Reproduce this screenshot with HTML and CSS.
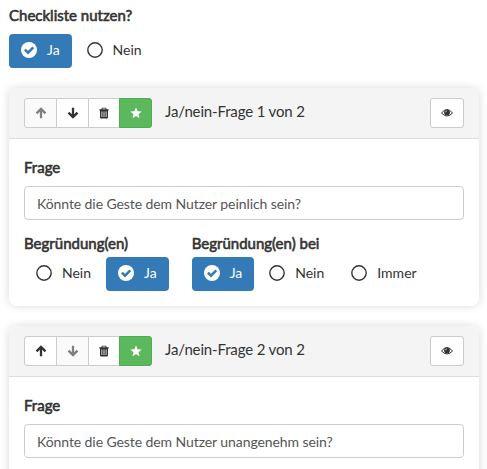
FILE: index.html
```html
<!DOCTYPE html>
<html lang="de">
<head>
<meta charset="utf-8">
<title>Checkliste</title>
<link rel="stylesheet" href="styles.css">
</head>
<body>
<svg width="0" height="0" class="defs">
  <symbol id="up" viewBox="0 0 12 12"><path d="M6 11.200V2.200M1.500 6.400L6 1.900L10.500 6.400" fill="none" stroke="currentColor" stroke-width="2.300"/></symbol>
  <symbol id="down" viewBox="0 0 12 12"><path d="M6 .8V9.800M1.500 5.600L6 10.100L10.500 5.600" fill="none" stroke="currentColor" stroke-width="2.300"/></symbol>
  <symbol id="trash" viewBox="0 0 12 12"><path fill="currentColor" fill-rule="evenodd" d="M4 0.800h4l.8 1.500H10.600v1.200H1.400V2.300H3.200zM4.600 1.600l-.4.7h3.600l-.4-.7zM2 3.500h8v6.900q0 1-1 1H3q-1 0-1-1zM3.500 4.600v5.400h.8V4.600zM5.600 4.600v5.400h.8V4.600zM7.700 4.600v5.400h.8V4.600z"/></symbol>
  <symbol id="star" viewBox="0 0 12 12"><path fill="currentColor" d="M6 .3L7.600 4.200L11.700 4.500L8.500 7.200L9.500 11.300L6 9.100L2.500 11.300L3.500 7.200L.3 4.500L4.400 4.200z"/></symbol>
  <symbol id="eye" viewBox="0 0 12 10"><path d="M.5 5Q6-1.800 11.500 5Q6 11 .5 5z" fill="none" stroke="currentColor" stroke-width="1"/><circle cx="6" cy="4.400" r="2.900" fill="currentColor"/><path d="M4.500 4.300Q4.600 3 5.800 2.800" fill="none" stroke="#fff" stroke-width=".7"/></symbol>
  <symbol id="on" viewBox="0 0 16 16"><circle cx="8" cy="8" r="8" fill="currentColor"/><path d="M3.900 7.600L7 10.700L12.300 5.400" fill="none" stroke="#337ab7" stroke-width="2.500"/></symbol>
  <symbol id="off" viewBox="0 0 16 16"><circle cx="8" cy="8" r="7.200" fill="none" stroke="currentColor" stroke-width="1.400"/></symbol>
</svg>
<main class="page">
  <div class="label">Checkliste nutzen?</div>
  <div class="options">
    <span class="option active"><svg><use href="#on"/></svg>Ja</span>
    <span class="option"><svg><use href="#off"/></svg>Nein</span>
  </div>

  <section class="card">
    <header class="card-head">
      <div class="group">
        <button class="btn disabled"><svg><use href="#up"/></svg></button>
        <button class="btn"><svg><use href="#down"/></svg></button>
        <button class="btn trash"><svg><use href="#trash"/></svg></button>
        <button class="btn success"><svg><use href="#star"/></svg></button>
      </div>
      <h2 class="title">Ja/nein-Frage 1 von 2</h2>
      <button class="btn eye"><svg><use href="#eye"/></svg></button>
    </header>
    <div class="card-body">
      <div class="label">Frage</div>
      <div class="input">Könnte die Geste dem Nutzer peinlich sein?</div>
      <div class="fields">
        <div class="field">
          <div class="label">Begründung(en)</div>
          <div class="options">
            <span class="option"><svg><use href="#off"/></svg>Nein</span>
            <span class="option active"><svg><use href="#on"/></svg>Ja</span>
          </div>
        </div>
        <div class="field">
          <div class="label">Begründung(en) bei</div>
          <div class="options">
            <span class="option active"><svg><use href="#on"/></svg>Ja</span>
            <span class="option"><svg><use href="#off"/></svg>Nein</span>
            <span class="option"><svg><use href="#off"/></svg>Immer</span>
          </div>
        </div>
      </div>
    </div>
  </section>

  <section class="card">
    <header class="card-head">
      <div class="group">
        <button class="btn"><svg><use href="#up"/></svg></button>
        <button class="btn disabled"><svg><use href="#down"/></svg></button>
        <button class="btn trash"><svg><use href="#trash"/></svg></button>
        <button class="btn success"><svg><use href="#star"/></svg></button>
      </div>
      <h2 class="title">Ja/nein-Frage 2 von 2</h2>
      <button class="btn eye"><svg><use href="#eye"/></svg></button>
    </header>
    <div class="card-body">
      <div class="label">Frage</div>
      <div class="input">Könnte die Geste dem Nutzer unangenehm sein?</div>
    </div>
  </section>
</main>
</body>
</html>
```

FILE: styles.css
```css
* { box-sizing: border-box; }
html, body { height: 100%; }
body {
  margin: 0;
  overflow: hidden;
  background: #fff;
  color: #333;
  font: 14px/20px Lato, sans-serif;
}
.defs { display: block; height: 0; }
.page { height: 100%; overflow: hidden; padding: 6px 0 0 9px; }
.label {
  height: 20px;
  font-size: 15px;
  line-height: 18px;
  -webkit-text-stroke: 0.6px #333;
  white-space: nowrap;
}
.page > .label { line-height: 19px; }
.options { display: flex; gap: 3px; }
.page > .options { margin-top: 8px; }
.option {
  display: flex;
  align-items: center;
  height: 34px;
  padding: 0 12px 2px;
  border-radius: 4px;
  line-height: 32px;
}
.option svg { width: 16px; height: 16px; margin-right: 10px; }
.active { background: #337ab7; color: #fff; }
.card {
  width: 470px;
  height: 218px;
  margin-top: 20px;
  overflow: hidden;
  border-radius: 8px;
  background: #fff;
  box-shadow: 0 0 10px rgba(0, 0, 0, 0.15);
}
.card-head {
  display: flex;
  align-items: center;
  height: 51px;
  padding: 0 15px;
  border-bottom: 1px solid #ddd;
  background: #f4f4f4;
}
.group { display: flex; }
.btn {
  display: flex;
  align-items: center;
  justify-content: center;
  width: 33px;
  height: 30px;
  padding: 0;
  border: 1px solid #ccc;
  background: #fff;
  color: #333;
}
.btn + .btn { margin-left: -1px; }
.btn svg { width: 12px; height: 12px; }
.group .btn:first-child { border-radius: 3px 0 0 3px; }
.group .btn:last-child { border-radius: 0 3px 3px 0; }
.trash { width: 32px; }
.disabled { background: #fafafa; color: #808080; }
.success { border-color: #4cae4c; background: #5cb85c; color: #fff; }
.title {
  margin: 0 auto 0 13px;
  padding-bottom: 4px;
  font-size: 15px;
  font-weight: 400;
  line-height: 20px;
  letter-spacing: -0.15px;
}
.eye { width: 34px; border-radius: 3px; }
.eye svg { height: 10px; }
.card-body { padding: 19px 15px 0; }
.input {
  height: 34px;
  margin-top: 8px;
  padding: 0 12px;
  border: 1px solid #ccc;
  border-radius: 4px;
  color: #555;
  line-height: 34px;
  letter-spacing: -0.08px;
}
.fields { display: flex; gap: 23px; margin-top: 14px; }
.field .options { margin-top: 3px; }
```
